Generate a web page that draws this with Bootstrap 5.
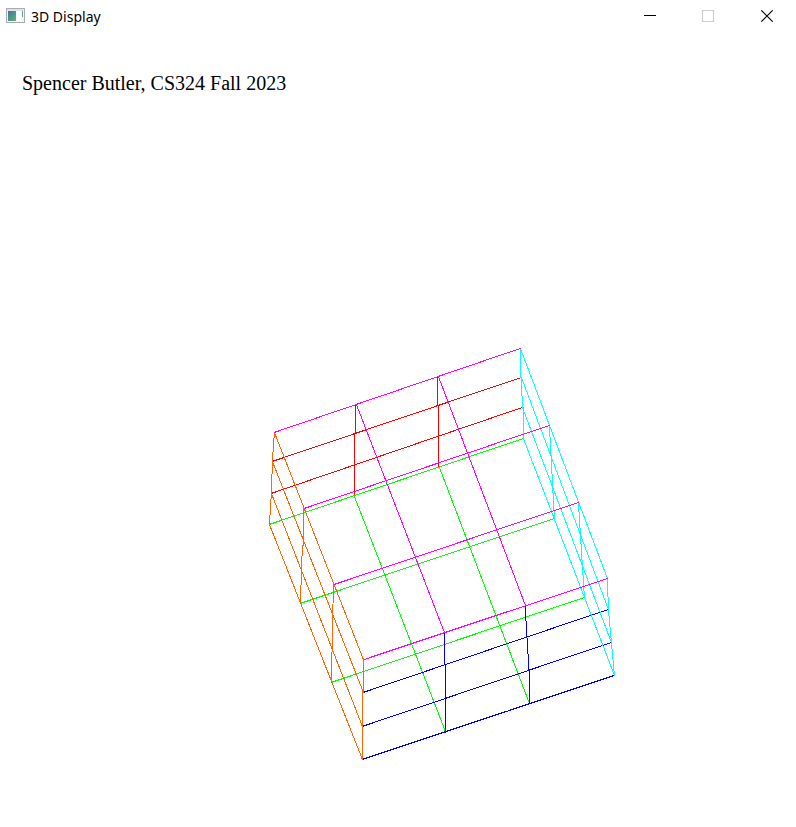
<!DOCTYPE html>
<html lang="en">
<head>
<meta charset="utf-8">
<meta name="viewport" content="width=device-width, initial-scale=1">
<title>3D Display</title>
<link href="https://cdn.jsdelivr.net/npm/bootstrap@5.3.0/dist/css/bootstrap.min.css" rel="stylesheet">
<style>
body { background: #fff; color: #000; }
.title-bar { height: 32px; padding-left: 6px; }
.title-text { font: 14px/20px "Noto Sans", "Open Sans", sans-serif; padding: 2px 0 0 6px; }
.win-btn { width: 58px; height: 32px; }
.win-close { width: 59px; }
.win-btn svg { display: block; }
.credit { font: 20px/24px "Liberation Serif", "Times New Roman", serif; padding: 39px 22px 17px; }
.wireframe { fill: none; stroke-width: 1; stroke-linecap: square; shape-rendering: crispEdges; }
</style>
<script src="https://cdn.jsdelivr.net/npm/bootstrap@5.3.0/dist/js/bootstrap.bundle.min.js"></script>
</head>
<body>
<header class="title-bar d-flex align-items-center">
  <svg width="19" height="16" viewBox="0 0 19 16" aria-hidden="true">
    <defs><linearGradient id="pane" x1="0" y1="0" x2="1" y2="1"><stop offset="0" stop-color="#47739a"/><stop offset="1" stop-color="#5bb37c"/></linearGradient></defs>
    <rect x="0.5" y="0.5" width="18" height="14" fill="#f4f5f5" stroke="#a9acb0"/>
    <rect x="1" y="1" width="17" height="2" fill="#dfe3e8"/>
    <rect x="2" y="3" width="8" height="10" fill="url(#pane)"/>
    <rect x="11" y="3" width="4" height="10" fill="#fff"/>
    <rect x="16" y="3" width="1" height="6" fill="#5d9f95"/>
  </svg>
  <h1 class="title-text mb-0 me-auto">3D Display</h1>
  <button class="win-btn btn p-0 border-0 rounded-0 d-flex align-items-center justify-content-center" type="button" aria-label="Minimize">
    <svg width="12" height="12" viewBox="0 0 12 12"><path d="M0 5.5H12" stroke="#000"/></svg>
  </button>
  <button class="win-btn btn p-0 border-0 rounded-0 d-flex align-items-center justify-content-center opacity-100" type="button" aria-label="Maximize" disabled>
    <svg width="12" height="12" viewBox="0 0 12 12"><rect x="0.5" y="0.5" width="11" height="11" fill="none" stroke="#ccc"/></svg>
  </button>
  <button class="win-btn win-close btn p-0 border-0 rounded-0 d-flex align-items-center justify-content-center" type="button" aria-label="Close">
    <svg width="13" height="12" viewBox="0 0 13 12"><path d="M1.3 0.3L12.7 11.7M12.7 0.3L1.3 11.7" stroke="#000" stroke-width="1.1"/></svg>
  </button>
</header>
<main>
  <p class="credit mb-0">Spencer Butler, CS324 Fall 2023</p>
  <svg class="wireframe d-block w-100" viewBox="0 112 796 700" role="img" aria-label="Wireframe box divided into a three by three by three grid">
    <g transform="translate(0.4 0.4)">
      <!-- back face -->
      <path stroke="#f00" d="M272 461L521 377M271 493L522 407M355 404V433M354 434V496M437 376V405M438 406V467"/>
      <!-- bottom face -->
      <path stroke="#0f0" d="M269 524L523 438M300 603L554 518M331 682L584 597M354 496L445 731M439 467L529 703"/>
      <!-- front face -->
      <path stroke="#00f" d="M363 692L608 609M362 726L611 642M362 759L614 675M444 632V664M445 665V732M525 605V620M526 621V637M527 638V653M528 654V670M529 671V703"/>
      <!-- left face -->
      <path stroke="#f60" d="M274 432L363 659M272 461L363 692M271 493L362 726M269 524L362 759M274 432L272 461L271 493L269 524M303 508V545M302 545L300 603M333 584L331 682M363 659V692M362 692V759"/>
      <!-- right face -->
      <path stroke="#0ff" d="M520 348L607 578M521 377L608 609M522 407L611 642M523 438L614 675M520 348V377M521 377L522 407M523 407V438M549 425L554 518M578 502L584 597M607 578L608 609L611 642L614 675"/>
      <!-- top face -->
      <path stroke="#f0f" d="M274 432L520 348M304 508L549 425M334 584L578 502M364 659L607 578M356 404L444 632M438 376L525 605"/>
    </g>
  </svg>
</main>
</body>
</html>
